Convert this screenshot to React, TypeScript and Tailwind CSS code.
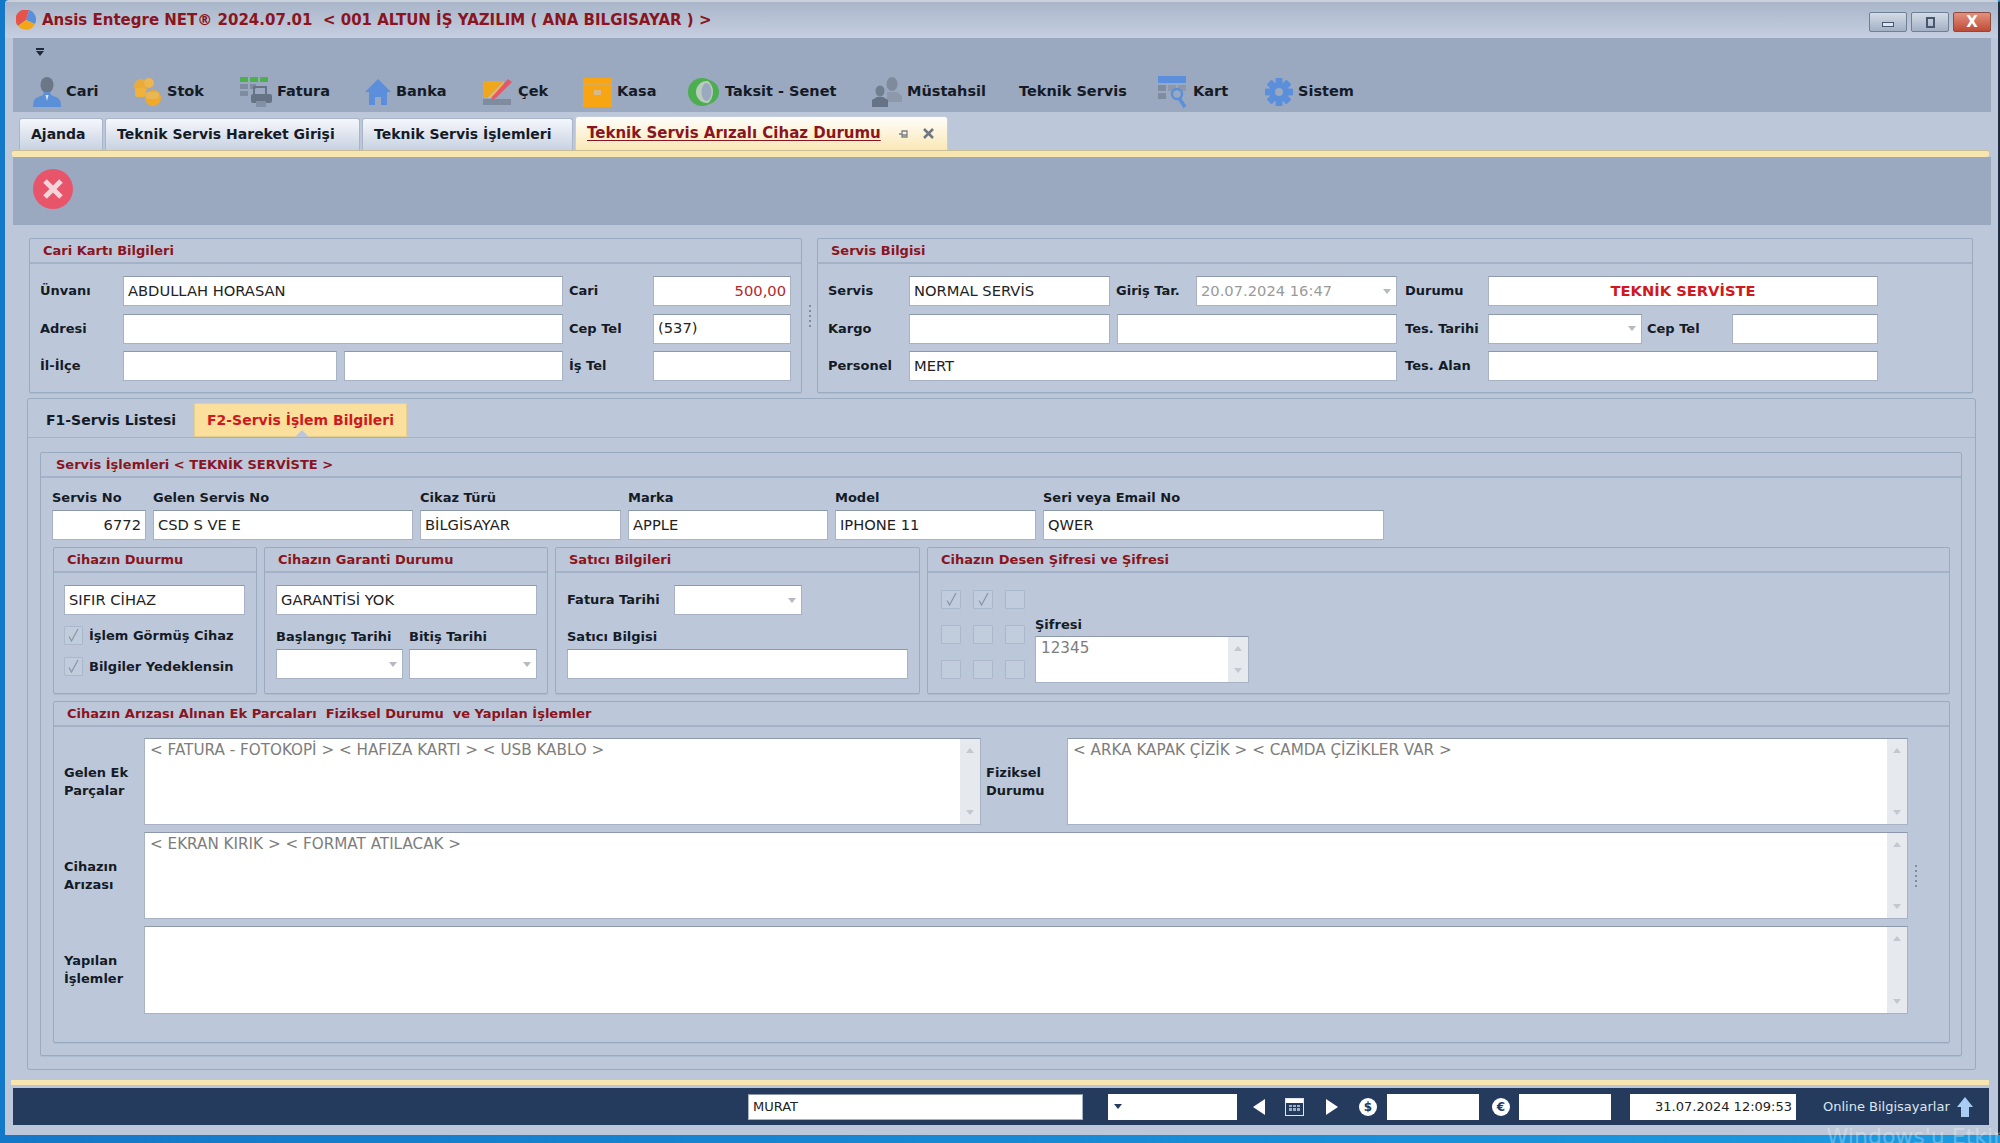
import React from 'react';

const Person = ({ body = '#5b8fd8', head = '#6b7686' }: { body?: string; head?: string }) => (
    <svg width="28" height="30" viewBox="0 0 28 30">
        <ellipse cx="14" cy="8" rx="6.5" ry="8" fill={head} />
        <path d="M11 15h6l1 3 7 3c2 1 3 4 3 9H0c0-5 1-8 3-9l7-3z" fill={body} />
        <path d="M12.5 18h3l-1.500 6z" fill="#dbe4f2" />
    </svg>
);

const Stok = () => (
    <svg width="30" height="30" viewBox="0 0 30 30">
        <circle cx="9" cy="9" r="7" fill="#e8ab3c" />
        <circle cx="17" cy="6" r="5" fill="#edb64e" />
        <rect x="3" y="11" width="11" height="9" rx="3" fill="#f0b23a" />
        <circle cx="21" cy="21" r="8" fill="#f1a928" />
        <rect x="14" y="15" width="13" height="7" rx="3" fill="#e9b654" />
    </svg>
);

const Fatura = () => (
    <svg width="32" height="30" viewBox="0 0 32 30">
        <rect x="0" y="0" width="8" height="5" fill="#4cb04c" />
        <rect x="10" y="0" width="8" height="5" fill="#4cb04c" />
        <rect x="20" y="0" width="8" height="5" fill="#4cb04c" />
        <rect x="0" y="7" width="8" height="5" fill="#7f8ca0" />
        <rect x="10" y="7" width="6" height="5" fill="#7f8ca0" />
        <rect x="0" y="14" width="8" height="5" fill="#7f8ca0" />
        <path d="M14 19V10h12v9" fill="none" stroke="#667387" strokeWidth="2" />
        <rect x="11" y="17" width="21" height="9" rx="2" fill="#667387" />
        <rect x="16" y="24" width="10" height="6" fill="#8290a5" />
    </svg>
);

const Home = () => (
    <svg width="26" height="26" viewBox="0 0 26 26">
        <path d="M13 0 26 13h-4v13h-6v-8h-6v8H4V13H0z" fill="#5b8fdc" />
    </svg>
);

const Cek = () => (
    <svg width="30" height="28" viewBox="0 0 30 28">
        <path d="M0 3h20L3 20H0z" fill="#f2a71b" />
        <path d="M21 3v4L8 20H4z" fill="#f4b640" />
        <rect x="0" y="21" width="28" height="6" fill="#7f8ca0" />
        <path d="M9 19 25 1l4 3-16 16-5 2z" fill="#e5586a" />
    </svg>
);

const Kasa = () => (
    <svg width="29" height="29" viewBox="0 0 29 29">
        <rect width="29" height="29" fill="#f7a513" />
        <rect y="6" width="29" height="1.500" fill="#d9ab55" />
        <rect x="11" y="12" width="7" height="5" fill="#d9b987" />
    </svg>
);

const Taksit = () => (
    <svg width="32" height="30" viewBox="0 0 32 30">
        <circle cx="14" cy="15" r="14" fill="#4cae50" />
        <circle cx="19" cy="15" r="11" fill="#b9cdbd" />
        <path d="M19 3a12 12 0 0 1 0 24 15 15 0 0 0 0-24z" fill="#4cae50" />
        <ellipse cx="18.500" cy="15" rx="5" ry="9" fill="#9aa8c0" />
    </svg>
);

const Mustahsil = () => (
    <svg width="30" height="30" viewBox="0 0 30 30">
        <ellipse cx="20" cy="7" rx="5.500" ry="7" fill="#7f8a9c" />
        <path d="M15 15h10l5 4v6H15z" fill="#8d98aa" />
        <ellipse cx="8" cy="14" rx="4.500" ry="5.500" fill="#717d90" />
        <path d="M5 20h6l5 3v7H0v-7z" fill="#667387" />
    </svg>
);

const Kart = () => (
    <svg width="30" height="32" viewBox="0 0 30 32">
        <rect width="28" height="7" fill="#5b8fdc" />
        <rect y="9" width="8" height="6" fill="#7f8ca0" />
        <rect x="10" y="9" width="8" height="6" fill="#8d98aa" />
        <rect x="20" y="9" width="8" height="6" fill="#8d98aa" />
        <rect y="17" width="8" height="6" fill="#7f8ca0" />
        <circle cx="19" cy="18" r="5" fill="none" stroke="#5b8fdc" strokeWidth="2.500" />
        <path d="M21 22l6 9" stroke="#5b8fdc" strokeWidth="3.500" />
    </svg>
);

const Gear = () => (
    <svg width="28" height="28" viewBox="0 0 28 28">
        <circle cx="14" cy="14" r="9.500" fill="#5b8fdc" />
        {[0, 45, 90, 135].map((a) => (
            <rect key={a} x="10.500" y="0" width="7" height="28" rx="1" fill="#5b8fdc" transform={`rotate(${a} 14 14)`} />
        ))}
        <circle cx="14" cy="14" r="4" fill="#9aa8c0" />
    </svg>
);

const Logo = () => (
    <svg width="20" height="20" viewBox="0 0 20 20">
        <path d="M10 10 2 16A10 10 0 0 1 13 0z" fill="#e5534b" />
        <path d="M10 10 13 0a10 10 0 0 1 6 14z" fill="#5b8fdc" />
        <path d="M10 10l9 4A10 10 0 0 1 2 16z" fill="#f2a71b" />
    </svg>
);

const toolbarItems = [
    { label: 'Cari', icon: <Person />, width: 'w-[99px]' },
    { label: 'Stok', icon: <Stok />, width: 'w-[108px]' },
    { label: 'Fatura', icon: <Fatura />, width: 'w-[125px]' },
    { label: 'Banka', icon: <Home />, width: 'w-[118px]' },
    { label: 'Çek', icon: <Cek />, width: 'w-[100px]' },
    { label: 'Kasa', icon: <Kasa />, width: 'w-[105px]' },
    { label: 'Taksit - Senet', icon: <Taksit />, width: 'w-[184px]' },
    { label: 'Müstahsil', icon: <Mustahsil />, width: 'w-[147px]' },
    { label: 'Teknik Servis', icon: null, width: 'w-[139px]' },
    { label: 'Kart', icon: <Kart />, width: 'w-[107px]' },
    { label: 'Sistem', icon: <Gear />, width: 'w-[100px]' },
];

type GroupProps = {
    title: React.ReactNode;
    className?: string;
    bodyClassName?: string;
    titleClassName?: string;
    children: React.ReactNode;
};

const Group = ({ title, className = '', bodyClassName = '', titleClassName = 'pl-[13px]', children }: GroupProps) => (
    <div className={`flex flex-col rounded-[2px] border border-[#9aaac0] shadow-[0_1px_0_#aebcd0] ${className}`}>
        <div className={`flex h-[25px] shrink-0 items-center whitespace-pre border-b-2 border-[#a3b2c8] text-[13px] font-bold text-[#8a1420] ${titleClassName}`}>
            {title}
        </div>
        <div className={`flex-1 ${bodyClassName}`}>{children}</div>
    </div>
);

type FieldProps = {
    value?: string;
    className?: string;
    textClassName?: string;
    dropdown?: boolean;
};

const Field = ({ value = '', className = '', textClassName = '', dropdown = false }: FieldProps) => (
    <div className={`flex h-[30px] shrink-0 items-center justify-between border border-[#a7b3c4] border-t-[#8d99ab] bg-white px-[4px] text-[14.700px] text-[#222] ${className}`}>
        <span className={`flex-1 whitespace-nowrap ${textClassName}`}>{value}</span>
        {dropdown && <span className="ml-1 mr-[1px] h-0 w-0 border-x-[4px] border-t-[5px] border-x-transparent border-t-[#b4b9c2]" />}
    </div>
);

const Label = ({ text, className = '' }: { text: string; className?: string }) => (
    <div className={`shrink-0 whitespace-nowrap text-[13px] font-bold text-[#151b26] ${className}`}>{text}</div>
);

const Column = ({ label, value, className, textClassName }: { label: string; value: string; className: string; textClassName?: string }) => (
    <div className={`flex flex-col ${className}`}>
        <Label text={label} className="h-[20px] leading-[16px]" />
        <Field value={value} className="w-full" textClassName={textClassName} />
    </div>
);

const Memo = ({ value = '', className = '' }: { value?: string; className?: string }) => (
    <div className={`flex border border-[#a7b3c4] border-t-[#8d99ab] bg-white ${className}`}>
        <div className="flex-1 whitespace-nowrap px-[5px] pt-[1px] text-[15.200px] leading-[20px] text-[#7d7d7d]">{value}</div>
        <div className="flex w-[20px] shrink-0 flex-col items-center justify-between bg-[#e6e9ee] py-[9px]">
            <span className="h-0 w-0 border-x-[4px] border-b-[5px] border-x-transparent border-b-[#c3c8d0]" />
            <span className="h-0 w-0 border-x-[4px] border-t-[5px] border-x-transparent border-t-[#c3c8d0]" />
        </div>
    </div>
);

const Check = ({ checked = false, className = '' }: { checked?: boolean; className?: string }) => (
    <div className={`flex h-[19px] w-[19px] shrink-0 items-center justify-center rounded-[1px] border border-[#aab8cb] bg-[#c1cddd] ${className}`}>
        {checked && (
            <svg width="13" height="15" viewBox="0 0 13 15" fill="none" stroke="#8c97a6" strokeWidth="1.300">
                <path d="M2 8.500 4.500 13 11 1" />
            </svg>
        )}
    </div>
);

const Dots = () => (
    <div className="flex flex-col gap-[3px]">
        {[0, 1, 2, 3, 4].map((i) => (
            <span key={i} className="h-[2px] w-[2px] bg-[#7f8ca3]" />
        ))}
    </div>
);

const Tab = ({ text, className }: { text: string; className: string }) => (
    <div className={`flex h-[32px] shrink-0 items-center rounded-t-[3px] border border-b-0 border-[#a9b5c8] bg-gradient-to-b from-[#f5f7fb] to-[#c8d2e2] pl-[11px] text-[14px] font-bold text-[#151b26] ${className}`}>
        {text}
    </div>
);

const WinButton = ({ children, className = '' }: { children: React.ReactNode; className?: string }) => (
    <div className={`flex h-[20px] w-[38px] items-center justify-center rounded-[2px] border border-[#6f7f96] bg-gradient-to-b from-[#d4dbe6] to-[#a3b1c5] ${className}`}>
        {children}
    </div>
);

const Round = ({ text }: { text: string }) => (
    <div className="flex h-[18px] w-[18px] shrink-0 items-center justify-center rounded-full bg-white text-[12px] font-bold text-[#243a5c]">{text}</div>
);

export default function App() {
    return (
        <div className="relative h-[1143px] w-[2000px] overflow-hidden bg-gradient-to-r from-[#1478c8] to-[#1b9ae0] font-['DejaVu_Sans',sans-serif]">
            <div className="ml-[5px] flex h-[1135px] w-[1995px] flex-col rounded-t-[4px] border-t-2 border-r-[2px] border-t-[#c9d0da] border-r-[#1d2a40] bg-[#bcc8da] pb-[10px]">
                {/* title bar */}
                <div className="flex h-[36px] shrink-0 items-center bg-gradient-to-b from-[#a9b5c9] to-[#c6cfe1] pl-[11px] pr-[7px]">
                    <Logo />
                    <span className="ml-[6px] whitespace-pre text-[15px] font-bold text-[#8a1420]">{'Ansis Entegre NET® 2024.07.01  < 001 ALTUN İŞ YAZILIM ( ANA BILGISAYAR ) >'}</span>
                    <div className="ml-auto mt-[4px] flex gap-[4px]">
                        <WinButton><span className="mt-[4px] h-[5px] w-[12px] border border-[#46566e] bg-[#dfe5ee]" /></WinButton>
                        <WinButton><span className="h-[11px] w-[9px] border-2 border-[#46566e]" /></WinButton>
                        <WinButton className="border-[#8a4a40] from-[#e4907e] to-[#bd4a36]"><span className="text-[15px] font-bold text-white">X</span></WinButton>
                    </div>
                </div>

                {/* toolbar */}
                <div className="ml-[8px] mr-[7px] flex h-[74px] shrink-0 flex-col bg-[#9aa8c0] pl-[20px]">
                    <div className="ml-[2px] mt-[10px] flex h-[8px] w-[10px] flex-col items-center">
                        <span className="h-[2px] w-[8px] bg-[#1f2a3c]" />
                        <span className="mt-[1px] h-0 w-0 border-x-[4px] border-t-[5px] border-x-transparent border-t-[#1f2a3c]" />
                    </div>
                    <div className="mt-[21px] flex h-[30px] items-center">
                        {toolbarItems.map((item) => (
                            <div key={item.label} className={`flex shrink-0 items-center gap-[5px] ${item.width}`}>
                                {item.icon}
                                <span className="whitespace-nowrap text-[14.500px] font-bold text-[#151b26]">{item.label}</span>
                            </div>
                        ))}
                    </div>
                </div>

                {/* document tabs */}
                <div className="ml-[8px] flex h-[38px] shrink-0 items-end gap-[2px] pl-[6px]">
                    <Tab text="Ajanda" className="w-[84px]" />
                    <Tab text="Teknik Servis Hareket Girişi" className="w-[255px]" />
                    <Tab text="Teknik Servis İşlemleri" className="w-[211px]" />
                    <div className="flex h-[34px] w-[373px] shrink-0 items-center rounded-t-[3px] border border-b-0 border-[#c5cddc] bg-gradient-to-b from-[#fdfdfb] to-[#fbe8b4] pl-[11px] text-[15px] font-bold text-[#8a1420]">
                        <span className="underline underline-offset-2">Teknik Servis Arızalı Cihaz Durumu</span>
                        <svg className="ml-[18px]" width="10" height="10" viewBox="0 0 10 10" stroke="#7a7f8a" strokeWidth="1.300" fill="none">
                            <path d="M0 5h3M3 2h5v6H3zM3 6h5" />
                        </svg>
                        <svg className="ml-[14px]" width="11" height="11" viewBox="0 0 11 11" stroke="#6f7682" strokeWidth="2.500">
                            <path d="M1 1l9 9M10 1l-9 9" />
                        </svg>
                    </div>
                </div>
                <div className="ml-[7px] mr-[9px] h-[7px] shrink-0 rounded-[2px] border-t border-[#c9bd94] bg-[#f7e6b0]" />

                {/* action strip */}
                <div className="ml-[8px] mr-[7px] flex h-[68px] shrink-0 items-center bg-[#9aa8c0] pl-[20px] pb-[4px]">
                    <div className="flex h-[40px] w-[40px] items-center justify-center rounded-full bg-[#e8556a]">
                        <svg width="22" height="22" viewBox="0 0 22 22" stroke="#f4d6da" strokeWidth="5">
                            <path d="M3 3l16 16M19 3 3 19" />
                        </svg>
                    </div>
                </div>

                {/* work area */}
                <div className="ml-[8px] flex flex-1 flex-col overflow-hidden pl-[14px] pr-[10px] pt-[13px]">
                    <div className="ml-[2px] flex shrink-0 items-stretch">
                        <Group title="Cari Kartı Bilgileri" className="h-[155px] w-[773px]" bodyClassName="flex flex-col gap-[7.500px] pl-[10px] pt-[12px]">
                            <div className="flex items-center">
                                <Label text="Ünvanı" className="w-[83px]" />
                                <Field value="ABDULLAH HORASAN" className="w-[440px]" />
                                <Label text="Cari" className="ml-[6px] w-[84px]" />
                                <Field value="500,00" className="w-[138px]" textClassName="text-right text-[#b5252c]" />
                            </div>
                            <div className="flex items-center">
                                <Label text="Adresi" className="w-[83px]" />
                                <Field className="w-[440px]" />
                                <Label text="Cep Tel" className="ml-[6px] w-[84px]" />
                                <Field value="(537)" className="w-[138px]" />
                            </div>
                            <div className="flex items-center">
                                <Label text="İl-İlçe" className="w-[83px]" />
                                <Field className="w-[214px]" />
                                <Field className="ml-[7px] w-[219px]" />
                                <Label text="İş Tel" className="ml-[6px] w-[84px]" />
                                <Field className="w-[138px]" />
                            </div>
                        </Group>
                        <div className="flex w-[15px] items-center justify-center"><Dots /></div>
                        <Group title="Servis Bilgisi" className="h-[155px] w-[1156px]" bodyClassName="flex flex-col gap-[7.500px] pl-[10px] pt-[12px]">
                            <div className="flex items-center">
                                <Label text="Servis" className="w-[81px]" />
                                <Field value="NORMAL SERVİS" className="w-[201px]" />
                                <Label text="Giriş Tar." className="ml-[6px] w-[80px]" />
                                <Field value="20.07.2024 16:47" className="w-[201px]" textClassName="text-[#9a9a9a]" dropdown />
                                <Label text="Durumu" className="ml-[8px] w-[83px]" />
                                <Field value="TEKNİK SERVİSTE" className="w-[390px]" textClassName="text-center font-bold text-[#d0181f]" />
                            </div>
                            <div className="flex items-center">
                                <Label text="Kargo" className="w-[81px]" />
                                <Field className="w-[201px]" />
                                <Field className="ml-[7px] w-[280px]" />
                                <Label text="Tes. Tarihi" className="ml-[8px] w-[83px]" />
                                <Field className="w-[154px]" dropdown />
                                <Label text="Cep Tel" className="ml-[5px] w-[85px]" />
                                <Field className="w-[146px]" />
                            </div>
                            <div className="flex items-center">
                                <Label text="Personel" className="w-[81px]" />
                                <Field value="MERT" className="w-[488px]" />
                                <Label text="Tes. Alan" className="ml-[8px] w-[83px]" />
                                <Field className="w-[390px]" />
                            </div>
                        </Group>
                    </div>

                    <div className="mt-[5px] flex h-[672px] w-[1949px] shrink-0 flex-col rounded-[3px] border border-[#9aaac0] shadow-[0_1px_0_#aebcd0]">
                        <div className="flex h-[39px] shrink-0 items-end border-b border-[#a3b2c8] pl-[18px]">
                            <div className="flex h-[34px] w-[148px] items-center text-[14px] font-bold text-[#151b26]">F1-Servis Listesi</div>
                            <div className="relative flex h-[34px] w-[213px] items-center justify-center border border-[#e5cf8f] bg-[#fae09c] text-[14px] font-bold text-[#d0181f]">
                                F2-Servis İşlem Bilgileri
                                <span className="absolute -bottom-px left-[100px] h-0 w-0 border-x-[7px] border-b-[7px] border-x-transparent border-b-[#bcc8da]" />
                            </div>
                        </div>

                        <div className="ml-[12px] mt-[14px] w-[1922px]">
                            <Group title="Servis İşlemleri < TEKNİK SERVİSTE >" titleClassName="pl-[15px]" className="h-[604px]" bodyClassName="pl-[11px] pt-[12px]">
                                <div className="flex gap-[7px]">
                                    <Column label="Servis No" value="6772" className="w-[94px]" textClassName="text-right" />
                                    <Column label="Gelen Servis No" value="CSD S VE E" className="w-[260px]" />
                                    <Column label="Cikaz Türü" value="BİLGİSAYAR" className="w-[201px]" />
                                    <Column label="Marka" value="APPLE" className="w-[200px]" />
                                    <Column label="Model" value="IPHONE 11" className="w-[201px]" />
                                    <Column label="Seri veya Email No" value="QWER" className="w-[341px]" />
                                </div>

                                <div className="ml-[1px] mt-[7px] flex h-[147px] gap-[7px]">
                                    <Group title="Cihazın Duurmu" className="w-[204px]" bodyClassName="pl-[10px] pt-[12px]">
                                        <Field value="SIFIR CİHAZ" className="w-[181px]" />
                                        <div className="mt-[11px] flex items-center gap-[6px]"><Check checked /><Label text="İşlem Görmüş Cihaz" /></div>
                                        <div className="mt-[11px] flex items-center gap-[6px]"><Check checked /><Label text="Bilgiler Yedeklensin" /></div>
                                    </Group>
                                    <Group title="Cihazın Garanti Durumu" className="w-[284px]" bodyClassName="pl-[11px] pt-[12px]">
                                        <Field value="GARANTİSİ YOK" className="w-[261px]" />
                                        <div className="mt-[12px] flex gap-[6px]">
                                            <div className="w-[127px]">
                                                <Label text="Başlangıç Tarihi" className="h-[22px]" />
                                                <Field className="w-full" dropdown />
                                            </div>
                                            <div className="w-[128px]">
                                                <Label text="Bitiş Tarihi" className="h-[22px]" />
                                                <Field className="w-full" dropdown />
                                            </div>
                                        </div>
                                    </Group>
                                    <Group title="Satıcı Bilgileri" className="w-[365px]" bodyClassName="pl-[11px] pt-[12px]">
                                        <div className="flex items-center">
                                            <Label text="Fatura Tarihi" className="w-[107px]" />
                                            <Field className="w-[128px]" dropdown />
                                        </div>
                                        <Label text="Satıcı Bilgisi" className="mt-[12px] h-[22px]" />
                                        <Field className="w-[341px]" />
                                    </Group>
                                    <Group title="Cihazın Desen Şifresi ve Şifresi" className="w-[1023px]" bodyClassName="flex pl-[13px] pt-[17px]">
                                        <div className="grid h-[89px] w-[94px] grid-cols-[20px_20px_20px] content-between gap-x-[12px]">
                                            <Check checked className="w-[20px]" />
                                            <Check checked className="w-[20px]" />
                                            <Check className="w-[20px]" />
                                            <Check className="w-[20px]" />
                                            <Check className="w-[20px]" />
                                            <Check className="w-[20px]" />
                                            <Check className="w-[20px]" />
                                            <Check className="w-[20px]" />
                                            <Check className="w-[20px]" />
                                        </div>
                                        <div className="mt-[25px] flex flex-col">
                                            <Label text="Şifresi" className="h-[21px]" />
                                            <Memo value="12345" className="h-[47px] w-[214px]" />
                                        </div>
                                    </Group>
                                </div>

                                <Group title="Cihazın Arızası Alınan Ek Parcaları  Fiziksel Durumu  ve Yapılan İşlemler" className="ml-[1px] mt-[7px] h-[342px] w-[1897px]" bodyClassName="flex flex-col gap-[7px] pl-[10px] pt-[11px]">
                                    <div className="flex items-center">
                                        <Label text={'Gelen Ek\nParçalar'} className="w-[80px] whitespace-pre-line leading-[18px]" />
                                        <Memo value="< FATURA - FOTOKOPİ > < HAFIZA KARTI > < USB KABLO >" className="h-[87px] w-[837px]" />
                                        <Label text={'Fiziksel\nDurumu'} className="ml-[5px] w-[81px] whitespace-pre-line leading-[18px]" />
                                        <Memo value="< ARKA KAPAK ÇİZİK > < CAMDA ÇİZİKLER VAR >" className="h-[87px] w-[841px]" />
                                    </div>
                                    <div className="flex items-center">
                                        <Label text={'Cihazın\nArızası'} className="w-[80px] whitespace-pre-line leading-[18px]" />
                                        <Memo value="< EKRAN KIRIK > < FORMAT ATILACAK >" className="h-[87px] w-[1764px]" />
                                        <div className="ml-[7px]"><Dots /></div>
                                    </div>
                                    <div className="flex items-center">
                                        <Label text={'Yapılan\nİşlemler'} className="w-[80px] whitespace-pre-line leading-[18px]" />
                                        <Memo className="h-[88px] w-[1764px]" />
                                    </div>
                                </Group>
                            </Group>
                        </div>
                    </div>
                </div>

                {/* status bar */}
                <div className="ml-[6px] mr-[9px] mt-[10px] h-[5px] shrink-0 bg-[#f7e6b0]" />
                <div className="ml-[8px] mt-[3px] flex h-[37px] w-[1976px] shrink-0 items-center bg-[#243b5e] pl-[735px] text-[13px]">
                    <Field value="MURAT" className="!h-[26px] w-[335px] !text-[13px]" />
                    <div className="ml-[25px] flex h-[26px] w-[129px] items-center bg-white pl-[6px]">
                        <span className="h-0 w-0 border-x-[4px] border-t-[5px] border-x-transparent border-t-[#243b5e]" />
                    </div>
                    <span className="ml-[16px] h-0 w-0 border-y-[8px] border-r-[12px] border-y-transparent border-r-white" />
                    <div className="ml-[20px] flex h-[18px] w-[19px] flex-col border border-[#dfe6f0] bg-[#243b5e]">
                        <span className="h-[4px] bg-white" />
                        <div className="mt-[2px] ml-[3px] grid w-[11px] grid-cols-3 gap-[1px]">
                            <span className="h-[2.500px] w-[2.500px] bg-[#9fb0c8]" />
                            <span className="h-[2.500px] w-[2.500px] bg-[#9fb0c8]" />
                            <span className="h-[2.500px] w-[2.500px] bg-[#9fb0c8]" />
                            <span className="h-[2.500px] w-[2.500px] bg-[#9fb0c8]" />
                            <span className="h-[2.500px] w-[2.500px] bg-[#9fb0c8]" />
                            <span className="h-[2.500px] w-[2.500px] bg-[#9fb0c8]" />
                        </div>
                    </div>
                    <span className="ml-[22px] h-0 w-0 border-y-[8px] border-l-[12px] border-y-transparent border-l-white" />
                    <div className="ml-[21px]"><Round text="$" /></div>
                    <div className="ml-[10px] h-[26px] w-[92px] bg-white" />
                    <div className="ml-[13px]"><Round text="€" /></div>
                    <div className="ml-[9px] h-[26px] w-[92px] bg-white" />
                    <div className="ml-[19px] flex h-[26px] w-[166px] items-center justify-end bg-white pr-[4px] text-[#222]">31.07.2024 12:09:53</div>
                    <span className="ml-[27px] whitespace-nowrap text-[#dfe6f0]">Online Bilgisayarlar</span>
                    <svg className="ml-[7px]" width="16" height="20" viewBox="0 0 16 20">
                        <path d="M8 0l8 10h-4v10H4V10H0z" fill="#a9cdf2" />
                    </svg>
                </div>
            </div>
            <span className="absolute bottom-[-10px] right-[-62px] whitespace-nowrap text-[22px] text-white/30">Windows'u Etkinleştir</span>
        </div>
    );
}
